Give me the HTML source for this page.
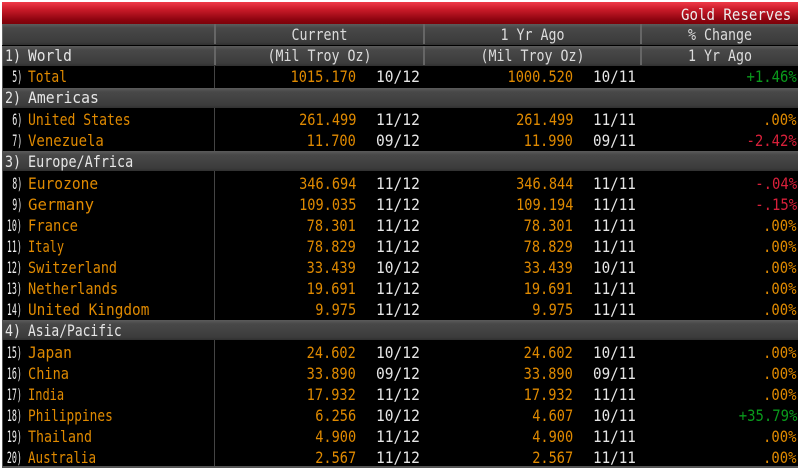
<!DOCTYPE html>
<html><head><meta charset="utf-8"><style>
html,body{margin:0;padding:0;background:#fff}
#p{position:relative;width:800px;height:472px;overflow:hidden;background:#fff;font-family:"DejaVu Sans Mono","Liberation Mono",monospace;font-size:16px;color:#ddd}
#m{position:absolute;left:2px;top:2px;width:796px;height:465px;background:#000}
#t{position:absolute;left:2px;top:2px;width:796px;height:22px;background:linear-gradient(#f03a48,#c81a28 35%,#8e0410 80%,#7c0209)}
.b{position:absolute;left:2px;width:796px;background:linear-gradient(#5c5c5c,#484848 20%,#3c3c3c 85%,#303030);border-left:1px solid #666;box-sizing:border-box}
.v{position:absolute;width:2px;background:#666}
.l{position:absolute;left:214px;width:1px;background:#444}
.r{position:absolute;left:0;width:800px;height:21px;line-height:21px;white-space:pre;filter:blur(.25px)}
.r span{position:absolute;top:0;transform:scaleX(.85);transform-origin:right center}
.r .i{right:778px;transform:scaleX(.52);color:#eee}
.r .n{left:28px;color:#e08a00;transform-origin:left center}
.c{right:444px;color:#e08a00}
.r .d{left:376px;color:#e6e6e6;transform:scaleX(.91);transform-origin:left center}
.y{right:227px;color:#e08a00}
.r .e{left:593px;color:#e6e6e6;transform:scaleX(.89);transform-origin:left center}
.r .p{right:3px;color:#e08a00;transform:scaleX(.87)}
.g{color:#0a9a1c!important}
.x{color:#d8203a!important}
.r .s{left:5px;color:#e6e6e6;transform:scaleX(.83);transform-origin:left center}
.r .q{left:28px;color:#e6e6e6;transform-origin:left center}
.r .h{text-align:center;color:#dcdcdc;transform:scaleX(.83);transform-origin:center center}
</style></head><body><div id="p">
<div id="m"></div>
<div id="t"></div>
<div class="r" style="top:4px"><span style="right:9px;color:#eee;transform:scaleX(.88)">Gold Reserves</span></div>

<div class="b" style="top:24px;height:21px"></div>
<div class="b" style="top:46px;height:20px"></div>
<div class="b" style="top:88px;height:20px"></div>
<div class="b" style="top:151px;height:20px"></div>
<div class="b" style="top:320px;height:20px"></div>

<div class="v" style="left:214px;top:24px;height:20px"></div>
<div class="v" style="left:214px;top:46px;height:19px"></div>
<div class="v" style="left:423px;top:24px;height:20px"></div>
<div class="v" style="left:423px;top:46px;height:19px"></div>
<div class="v" style="left:640px;top:24px;height:20px"></div>
<div class="v" style="left:640px;top:46px;height:19px"></div>

<div class="l" style="top:66px;height:22px"></div>
<div class="l" style="top:108px;height:43px"></div>
<div class="l" style="top:171px;height:149px"></div>
<div class="l" style="top:340px;height:127px"></div>
<div style="position:absolute;left:2px;top:466px;width:796px;height:2px;background:#555"></div>
<div style="position:absolute;left:2px;top:66px;width:1px;height:400px;background:#555"></div>

<div class="r" style="top:24px"><span class="h" style="left:216px;width:207px">Current</span><span class="h" style="left:425px;width:215px">1 Yr Ago</span><span class="h" style="left:642px;width:156px">% Change</span></div>
<div class="r" style="top:45px"><span class="s">1)</span><span class="q" style="transform:scaleX(.91)">World</span><span class="h" style="left:216px;width:207px">(Mil Troy Oz)</span><span class="h" style="left:425px;width:215px">(Mil Troy Oz)</span><span class="h" style="left:642px;width:156px">1 Yr Ago</span></div>

<div class="r" style="top:66px"><span class="i">5)</span><span class="n" style="transform:scaleX(.81)">Total</span><span class="c">1015.170</span><span class="d">10/12</span><span class="y">1000.520</span><span class="e">10/11</span><span class="p g">+1.46%</span></div>
<div class="r" style="top:87px"><span class="s">2)</span><span class="q" style="transform:scaleX(.92)">Americas</span></div>
<div class="r" style="top:109px"><span class="i">6)</span><span class="n" style="transform:scaleX(.82)">United States</span><span class="c">261.499</span><span class="d">11/12</span><span class="y">261.499</span><span class="e">11/11</span><span class="p">.00%</span></div>
<div class="r" style="top:130px"><span class="i">7)</span><span class="n" style="transform:scaleX(.875)">Venezuela</span><span class="c">11.700</span><span class="d">09/12</span><span class="y">11.990</span><span class="e">09/11</span><span class="p x">-2.42%</span></div>
<div class="r" style="top:151px"><span class="s">3)</span><span class="q" style="transform:scaleX(.84)">Europe/Africa</span></div>
<div class="r" style="top:173px"><span class="i">8)</span><span class="n" style="transform:scaleX(.91)">Eurozone</span><span class="c">346.694</span><span class="d">11/12</span><span class="y">346.844</span><span class="e">11/11</span><span class="p x">-.04%</span></div>
<div class="r" style="top:194px"><span class="i">9)</span><span class="n" style="transform:scaleX(.98)">Germany</span><span class="c">109.035</span><span class="d">11/12</span><span class="y">109.194</span><span class="e">11/11</span><span class="p x">-.15%</span></div>
<div class="r" style="top:215px"><span class="i">10)</span><span class="n" style="transform:scaleX(.865)">France</span><span class="c">78.301</span><span class="d">11/12</span><span class="y">78.301</span><span class="e">11/11</span><span class="p">.00%</span></div>
<div class="r" style="top:236px"><span class="i">11)</span><span class="n" style="transform:scaleX(.75)">Italy</span><span class="c">78.829</span><span class="d">11/12</span><span class="y">78.829</span><span class="e">11/11</span><span class="p">.00%</span></div>
<div class="r" style="top:257px"><span class="i">12)</span><span class="n" style="transform:scaleX(.84)">Switzerland</span><span class="c">33.439</span><span class="d">10/12</span><span class="y">33.439</span><span class="e">10/11</span><span class="p">.00%</span></div>
<div class="r" style="top:278px"><span class="i">13)</span><span class="n" style="transform:scaleX(.85)">Netherlands</span><span class="c">19.691</span><span class="d">11/12</span><span class="y">19.691</span><span class="e">11/11</span><span class="p">.00%</span></div>
<div class="r" style="top:299px"><span class="i">14)</span><span class="n" style="transform:scaleX(.9)">United Kingdom</span><span class="c">9.975</span><span class="d">11/12</span><span class="y">9.975</span><span class="e">11/11</span><span class="p">.00%</span></div>
<div class="r" style="top:320px"><span class="s">4)</span><span class="q" style="transform:scaleX(.81)">Asia/Pacific</span></div>
<div class="r" style="top:342px"><span class="i">15)</span><span class="n" style="transform:scaleX(.91)">Japan</span><span class="c">24.602</span><span class="d">10/12</span><span class="y">24.602</span><span class="e">10/11</span><span class="p">.00%</span></div>
<div class="r" style="top:363px"><span class="i">16)</span><span class="n" style="transform:scaleX(.85)">China</span><span class="c">33.890</span><span class="d">09/12</span><span class="y">33.890</span><span class="e">09/11</span><span class="p">.00%</span></div>
<div class="r" style="top:384px"><span class="i">17)</span><span class="n" style="transform:scaleX(.75)">India</span><span class="c">17.932</span><span class="d">11/12</span><span class="y">17.932</span><span class="e">11/11</span><span class="p">.00%</span></div>
<div class="r" style="top:405px"><span class="i">18)</span><span class="n" style="transform:scaleX(.8)">Philippines</span><span class="c">6.256</span><span class="d">10/12</span><span class="y">4.607</span><span class="e">10/11</span><span class="p g">+35.79%</span></div>
<div class="r" style="top:426px"><span class="i">19)</span><span class="n" style="transform:scaleX(.83)">Thailand</span><span class="c">4.900</span><span class="d">11/12</span><span class="y">4.900</span><span class="e">11/11</span><span class="p">.00%</span></div>
<div class="r" style="top:447px"><span class="i">20)</span><span class="n" style="transform:scaleX(.785)">Australia</span><span class="c">2.567</span><span class="d">11/12</span><span class="y">2.567</span><span class="e">11/11</span><span class="p">.00%</span></div>
</div></body></html>
